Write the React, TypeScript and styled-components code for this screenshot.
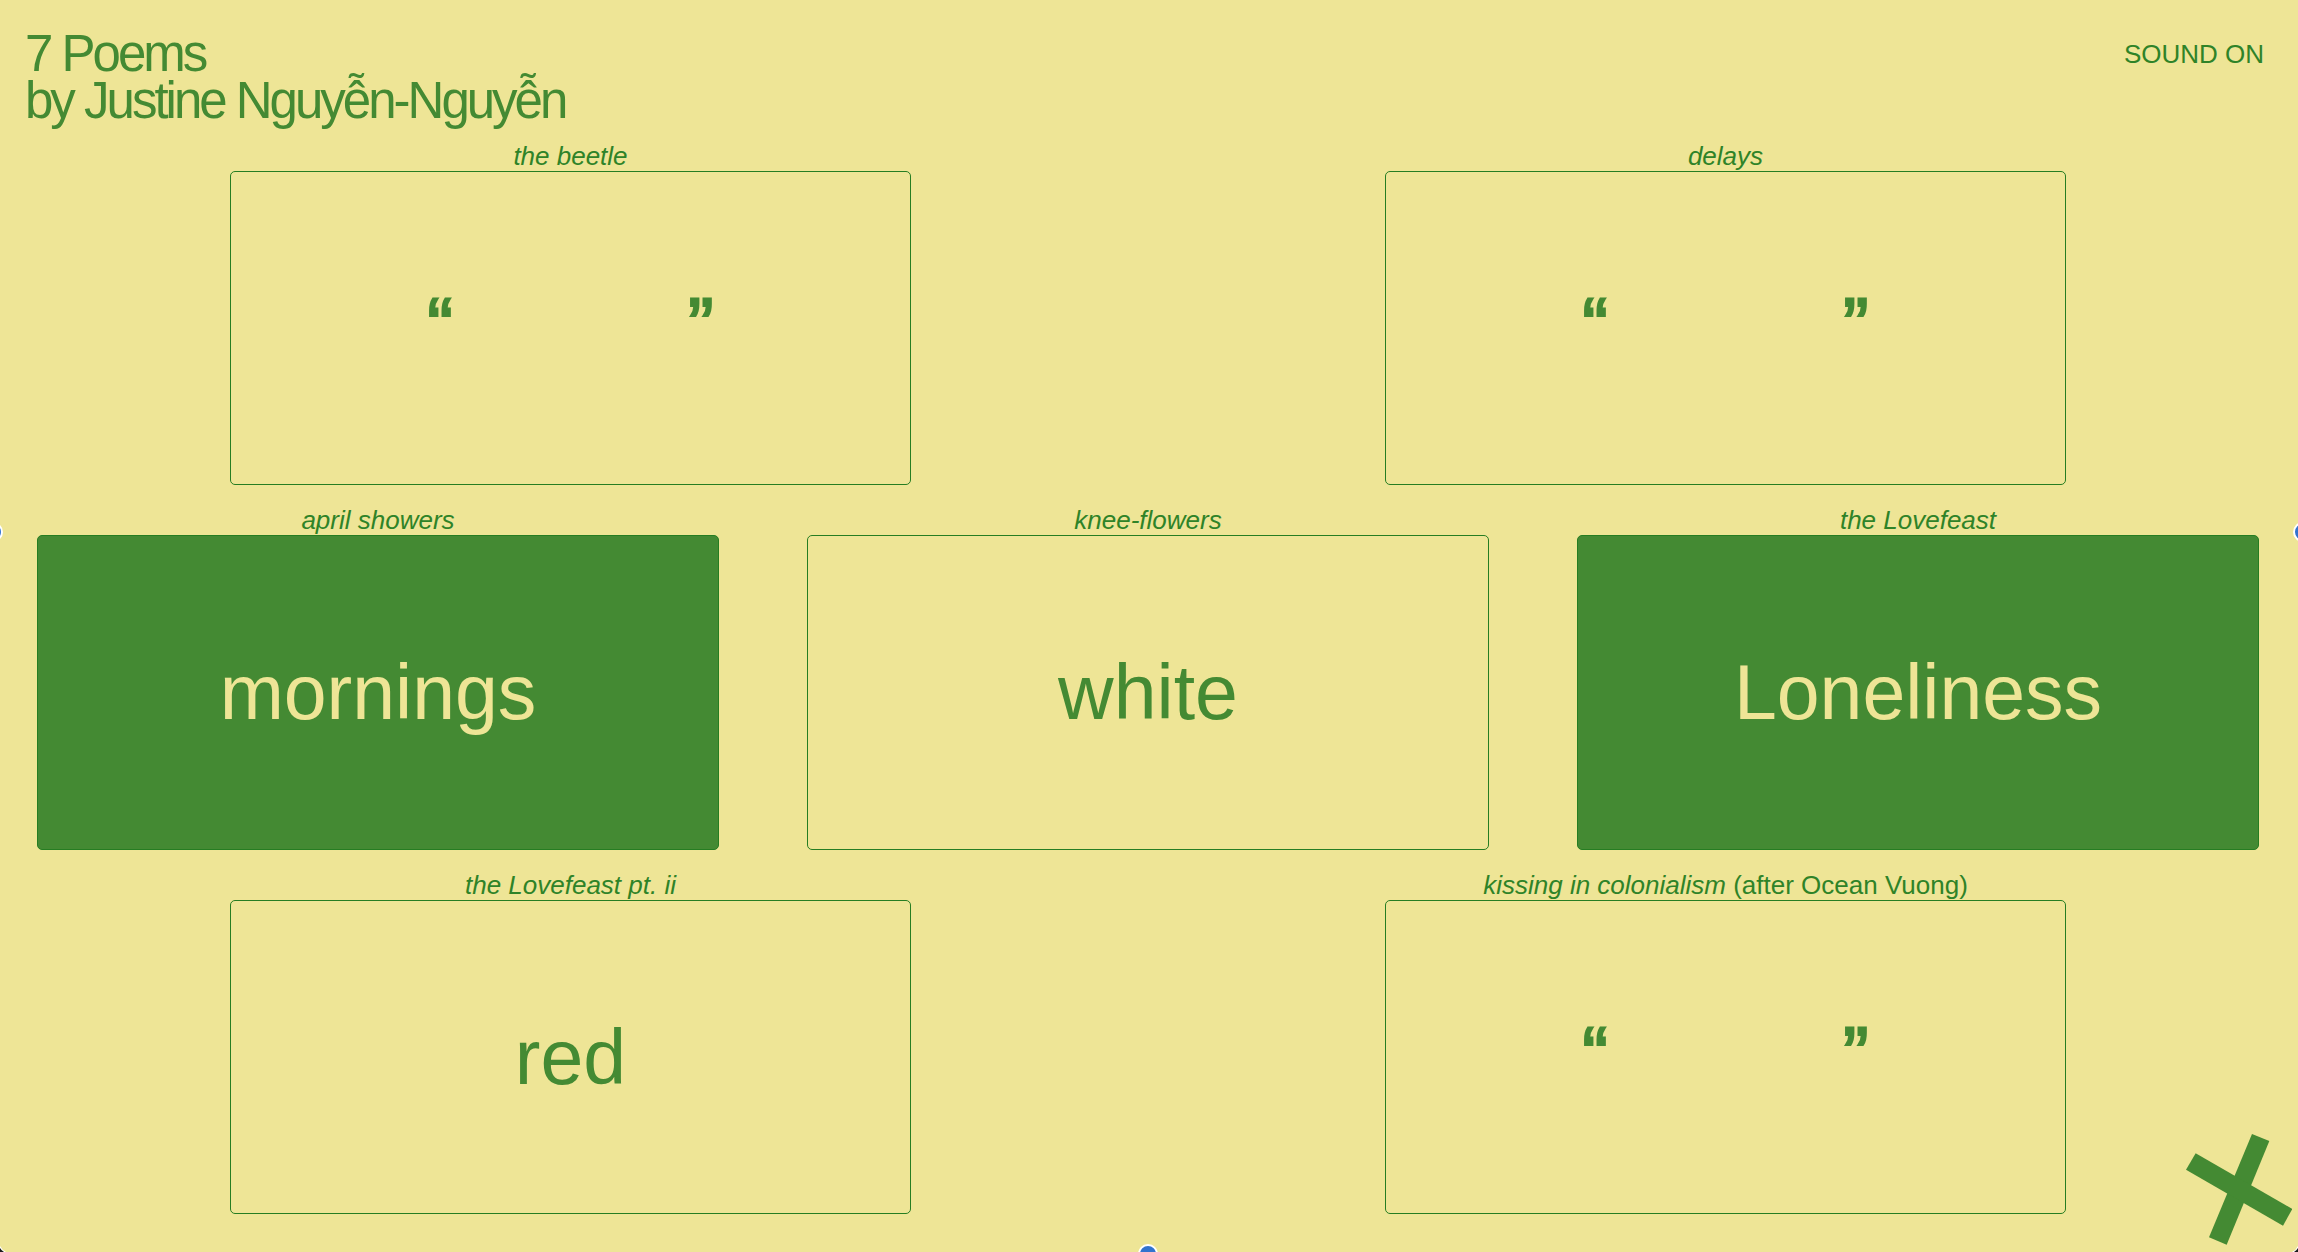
import React, { useState } from "react";
import styled, { createGlobalStyle } from "styled-components";

const paper = "#eee596";
const leaf = "#448a33";
const ink = "#2f8328";
const outline = "#267d22";

const GlobalStyle = createGlobalStyle`
  *, *::before, *::after { box-sizing: border-box; }
  body {
    margin: 0;
    background: ${paper};
    color: ${leaf};
    font-family: "Liberation Sans", Helvetica, Arial, sans-serif;
    font-size: 26px;
    line-height: 30px;
  }
`;

const Page = styled.div`
  position: relative;
  display: flex;
  flex-direction: column;
  min-height: 100vh;
  padding: 30px 0 38px;
  overflow: hidden;
`;

const Header = styled.header`
  display: flex;
  justify-content: space-between;
  align-items: flex-start;
  padding: 0 34px 0 25px;
`;

const Title = styled.h1`
  margin: 0;
  font-size: 51px;
  line-height: 47px;
  font-weight: 400;
  letter-spacing: -3px;
`;

const SoundToggle = styled.button`
  margin: 0;
  padding: 9px 0;
  border: 0;
  background: none;
  color: ${ink};
  font: inherit;
  cursor: pointer;
`;

const Stage = styled.main`
  display: flex;
  flex: 1;
  flex-direction: column;
  gap: 20px;
  margin: 17px -5px 0 -7px;
`;

const Row = styled.section`
  display: flex;
  flex: 1;
  justify-content: space-around;
`;

const Poem = styled.article`
  display: flex;
  flex: 0 0 calc(100% / 3 - 88px);
  flex-direction: column;
`;

const Label = styled.h2`
  margin: 0;
  color: ${ink};
  font-size: 26px;
  line-height: 30px;
  font-weight: 400;
  text-align: center;
`;

const Card = styled.button<{ $filled?: boolean }>`
  display: flex;
  flex: 1;
  align-items: center;
  justify-content: center;
  min-height: 120px;
  padding: 0;
  border: 1px solid ${outline};
  border-radius: 5px;
  background: ${(p) => (p.$filled ? leaf : "transparent")};
  color: ${(p) => (p.$filled ? paper : leaf)};
  font: inherit;
  font-size: 77px;
  line-height: 88px;
  cursor: pointer;
`;

const Quotes = styled.span`
  display: flex;
  gap: 235px;
  padding-bottom: 6px;
  -webkit-text-stroke: 2px currentColor;
`;

const CloseButton = styled.button`
  position: absolute;
  right: 6px;
  bottom: 7px;
  width: 106px;
  height: 111px;
  padding: 0;
  border: 0;
  background: none;
  cursor: pointer;

  svg { display: block; }
`;

const Handle = styled.span<{ $side: "left" | "right" | "bottom" }>`
  position: absolute;
  width: 20px;
  height: 20px;
  border: 2px solid #fff;
  border-radius: 50%;
  background: #3273cf;
  ${(p) => p.$side === "left" && "left: -17px; top: 522px;"}
  ${(p) => p.$side === "right" && "right: -15px; top: 522px;"}
  ${(p) => p.$side === "bottom" && "left: calc(50% - 11px); bottom: -12px;"}
`;

const Corner = styled.svg<{ $side: "left" | "right" }>`
  position: absolute;
  bottom: 0;
  ${(p) => (p.$side === "left" ? "left: 0; transform: scaleX(-1);" : "right: 0;")}
`;

type PoemData = {
  title: string;
  note?: string;
  word?: string;
  filled?: boolean;
};

const rows: PoemData[][] = [
  [{ title: "the beetle" }, { title: "delays" }],
  [
    { title: "april showers", word: "mornings", filled: true },
    { title: "knee-flowers", word: "white" },
    { title: "the Lovefeast", word: "Loneliness", filled: true },
  ],
  [
    { title: "the Lovefeast pt. ii", word: "red" },
    { title: "kissing in colonialism", note: "(after Ocean Vuong)" },
  ],
];

function PoemCard({ title, note, word, filled }: PoemData) {
  return (
    <Poem>
      <Label>
        <em>{title}</em>
        {note && ` ${note}`}
      </Label>
      <Card type="button" $filled={filled}>
        {word ?? (
          <Quotes>
            <span>“</span>
            <span>”</span>
          </Quotes>
        )}
      </Card>
    </Poem>
  );
}

function PageCorner({ side }: { side: "left" | "right" }) {
  return (
    <Corner $side={side} width="6" height="6" viewBox="0 0 6 6" aria-hidden="true">
      <path d="M6 0 Q4 4 0 6 H6Z" fill="#fff" />
      <path d="M6 2 Q5 4 2 6 H6Z" fill="#1b1b1b" />
    </Corner>
  );
}

export default function App() {
  const [sound, setSound] = useState(true);

  return (
    <>
      <GlobalStyle />
      <Page>
        <Header>
          <Title>
            7 Poems
            <br />
            by Justine Nguyễn-Nguyễn
          </Title>
          <SoundToggle type="button" onClick={() => setSound(!sound)}>
            {sound ? "SOUND ON" : "SOUND OFF"}
          </SoundToggle>
        </Header>
        <Stage>
          {rows.map((row, i) => (
            <Row key={i}>
              {row.map((poem) => (
                <PoemCard key={poem.title} {...poem} />
              ))}
            </Row>
          ))}
        </Stage>
        <CloseButton type="button" aria-label="Close">
          <svg width="106" height="111" viewBox="198 163 318 333" fill={leaf} aria-hidden="true">
            <polygon points="396,163 448,184 320,495 267,473" />
            <polygon points="227,221 517,388 489,438 198,270" />
          </svg>
        </CloseButton>
        <Handle $side="left" />
        <Handle $side="right" />
        <Handle $side="bottom" />
        <PageCorner side="left" />
        <PageCorner side="right" />
      </Page>
    </>
  );
}
